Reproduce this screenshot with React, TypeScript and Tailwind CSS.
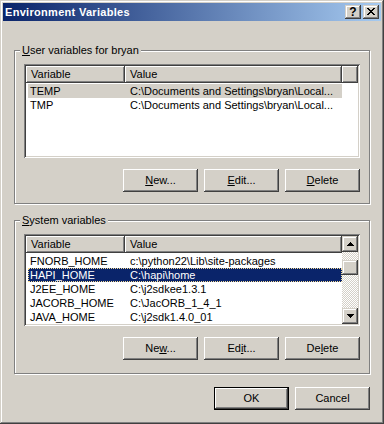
import React from "react";

const raised =
  "shadow-[inset_-1px_-1px_#404040,inset_1px_1px_#ffffff,inset_-2px_-2px_#808080]";
const raisedSb =
  "shadow-[inset_-1px_-1px_#404040,inset_1px_1px_#d4d0c8,inset_-2px_-2px_#808080,inset_2px_2px_#ffffff]";

function Btn({ children, def }: { children: React.ReactNode; def?: boolean }) {
  return (
    <div
      className={
        "w-[75px] h-[23px] bg-[#d4d0c8] flex items-center justify-center text-[11px] text-black leading-[13px] " +
        (def
          ? "shadow-[inset_0_0_0_1px_#000000,inset_-2px_-2px_#404040,inset_2px_2px_#ffffff,inset_-3px_-3px_#808080]"
          : raised)
      }
    >
      <span>{children}</span>
    </div>
  );
}

function Arrow({ up }: { up?: boolean }) {
  return (
    <svg width="7" height="4" viewBox="0 0 7 4" shapeRendering="crispEdges">
      {up ? (
        <>
          <rect x="3" y="0" width="1" height="1" fill="#000" />
          <rect x="2" y="1" width="3" height="1" fill="#000" />
          <rect x="1" y="2" width="5" height="1" fill="#000" />
          <rect x="0" y="3" width="7" height="1" fill="#000" />
        </>
      ) : (
        <>
          <rect x="0" y="0" width="7" height="1" fill="#000" />
          <rect x="1" y="1" width="5" height="1" fill="#000" />
          <rect x="2" y="2" width="3" height="1" fill="#000" />
          <rect x="3" y="3" width="1" height="1" fill="#000" />
        </>
      )}
    </svg>
  );
}

type Row = [string, string];

function ListView({
  h,
  rows,
  sel,
  focused,
  scroll,
}: {
  h: string;
  rows: Row[];
  sel: number;
  focused?: boolean;
  scroll?: boolean;
}) {
  return (
    <div
      className={
        "w-[336px] bg-white p-[2px] flex shadow-[inset_1px_1px_#808080,inset_-1px_-1px_#ffffff,inset_2px_2px_#404040,inset_-2px_-2px_#d4d0c8] " +
        h
      }
    >
      <div className="flex-1 flex flex-col min-w-0 overflow-hidden">
        <div className="flex h-[17px] shrink-0">
          <div className={"w-[99px] h-full bg-[#d4d0c8] pl-[5px] leading-[17px] text-[11px] text-black " + raised}>
            Variable
          </div>
          <div className={"w-[217px] h-full bg-[#d4d0c8] pl-[5px] leading-[17px] text-[11px] text-black " + raised}>
            Value
          </div>
          {!scroll && <div className={"flex-1 h-full bg-[#d4d0c8] " + raised} />}
        </div>
        <div className="flex flex-col mt-[1px]">
          {rows.map((r, i) => {
            const isSel = i === sel;
            const cls = isSel
              ? focused
                ? "bg-[#0a246a] text-white border border-dotted border-[#f5db95]"
                : "bg-[#d4d0c8] text-black border border-transparent"
              : "text-black border border-transparent";
            return (
              <div
                key={r[0]}
                className={"ml-[2px] w-[314px] h-[14px] flex items-center text-[11px] leading-[12px] whitespace-nowrap " + cls}
              >
                <div className="w-[96px] pl-[1px]">{r[0]}</div>
                <div className="w-[216px] pl-[5px]">{r[1]}</div>
              </div>
            );
          })}
        </div>
      </div>
      {scroll && (
        <div className="w-[16px] h-full flex flex-col shrink-0">
          <div className={"h-[16px] w-[16px] bg-[#d4d0c8] flex items-center justify-center shrink-0 pb-[1px] " + raisedSb}>
            <Arrow up />
          </div>
          <div className="flex-1 flex flex-col [background:repeating-conic-gradient(#d4d0c8_0%_25%,#ffffff_0%_50%)_0_0/2px_2px]">
            <div className="h-[8px] shrink-0" />
            <div className={"h-[15px] w-[16px] bg-[#d4d0c8] shrink-0 " + raisedSb} />
          </div>
          <div className={"h-[16px] w-[16px] bg-[#d4d0c8] flex items-center justify-center shrink-0 " + raisedSb}>
            <Arrow />
          </div>
        </div>
      )}
    </div>
  );
}

function Group({
  label,
  children,
  pb,
  extra,
}: {
  label: React.ReactNode;
  children: React.ReactNode;
  pb: string;
  extra: string;
}) {
  return (
    <div
      className={
        "relative w-[356px] border border-[#808080] shadow-[inset_1px_1px_#ffffff,1px_1px_#ffffff] pt-[13px] px-[9px] " +
        pb +
        " " +
        extra
      }
    >
      <div className="absolute left-[5px] top-[-8px] px-[2px] bg-[#d4d0c8] text-[11px] leading-[14px] text-black whitespace-nowrap">
        {label}
      </div>
      {children}
    </div>
  );
}

export default function App() {
  const docVal = "C:\\Documents and Settings\\bryan\\Local...";
  const userRows: Row[] = [
    ["TEMP", docVal],
    ["TMP", docVal],
  ];
  const sysRows: Row[] = [
    ["FNORB_HOME", "c:\\python22\\Lib\\site-packages"],
    ["HAPI_HOME", "C:\\hapi\\home"],
    ["J2EE_HOME", "C:\\j2sdkee1.3.1"],
    ["JACORB_HOME", "C:\\JacORB_1_4_1"],
    ["JAVA_HOME", "C:\\j2sdk1.4.0_01"],
  ];
  return (
    <div
      className="w-[384px] h-[424px] bg-[#d4d0c8] p-[3px] flex flex-col shadow-[inset_-1px_-1px_#404040,inset_1px_1px_#d4d0c8,inset_-2px_-2px_#808080,inset_2px_2px_#ffffff]"
      style={{ fontFamily: '"Liberation Sans", Arial, sans-serif' }}
    >
      <div className="h-[18px] shrink-0 flex items-center bg-[linear-gradient(to_right,#0a246a,#a6caf0)] pl-[2px] pr-[2px]">
        <div className="flex-1 text-white font-bold text-[11px] tracking-[0.3px] leading-[18px] whitespace-nowrap">
          Environment Variables
        </div>
        <div className="flex gap-[2px]">
          <div className={"w-[16px] h-[14px] bg-[#d4d0c8] flex items-center justify-center text-black font-bold text-[12px] leading-[12px] pb-[1px] " + raisedSb}>
            ?
          </div>
          <div className={"w-[16px] h-[14px] bg-[#d4d0c8] flex items-center justify-center pb-[1px] " + raisedSb}>
            <svg width="8" height="7" viewBox="0 0 8 7" shapeRendering="crispEdges">
              <rect x="0" y="0" width="2" height="1" fill="#000" />
              <rect x="6" y="0" width="2" height="1" fill="#000" />
              <rect x="1" y="1" width="2" height="1" fill="#000" />
              <rect x="5" y="1" width="2" height="1" fill="#000" />
              <rect x="2" y="2" width="4" height="1" fill="#000" />
              <rect x="3" y="3" width="2" height="1" fill="#000" />
              <rect x="2" y="4" width="4" height="1" fill="#000" />
              <rect x="1" y="5" width="2" height="1" fill="#000" />
              <rect x="5" y="5" width="2" height="1" fill="#000" />
              <rect x="0" y="6" width="2" height="1" fill="#000" />
              <rect x="6" y="6" width="2" height="1" fill="#000" />
            </svg>
          </div>
        </div>
      </div>

      <div className="px-[11px] flex flex-col">
        <Group
          label={
            <>
              <u>U</u>ser variables for bryan
            </>
          }
          pb="pb-[11px]"
          extra="mt-[29px]"
        >
          <ListView h="h-[94px]" rows={userRows} sel={0} />
          <div className="flex justify-end gap-[6px] mt-[11px]">
            <Btn>
              <u>N</u>ew...
            </Btn>
            <Btn>
              <u>E</u>dit...
            </Btn>
            <Btn>
              <u>D</u>elete
            </Btn>
          </div>
        </Group>

        <Group
          label={
            <>
              <u>S</u>ystem variables
            </>
          }
          pb="pb-[13px]"
          extra="mt-[16px]"
        >
          <ListView h="h-[92px]" rows={sysRows} sel={1} focused scroll />
          <div className="flex justify-end gap-[6px] mt-[11px]">
            <Btn>
              Ne<u>w</u>...
            </Btn>
            <Btn>
              Ed<u>i</u>t...
            </Btn>
            <Btn>
              De<u>l</u>ete
            </Btn>
          </div>
        </Group>

        <div className="flex justify-end gap-[6px] mt-[13px]">
          <Btn def>OK</Btn>
          <Btn>Cancel</Btn>
        </div>
      </div>
    </div>
  );
}
